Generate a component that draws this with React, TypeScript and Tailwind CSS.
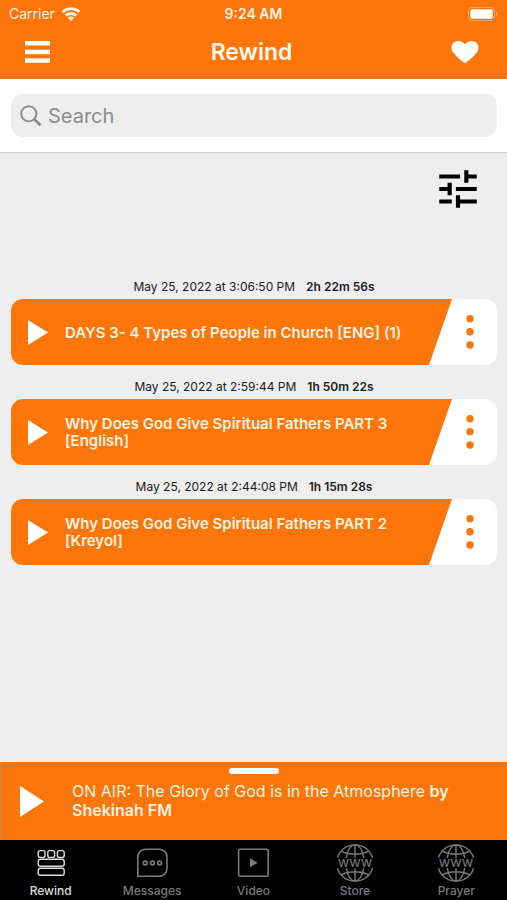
import { useState } from 'react'
import { MdTune } from 'react-icons/md'

interface Recording {
  date: string
  duration: string
  title: string
}

const recordings: Recording[] = [
  {
    date: 'May 25, 2022 at 3:06:50 PM',
    duration: '2h 22m 56s',
    title: 'DAYS 3- 4 Types of People in Church [ENG] (1)',
  },
  {
    date: 'May 25, 2022 at 2:59:44 PM',
    duration: '1h 50m 22s',
    title: 'Why Does God Give Spiritual Fathers PART 3 [English]',
  },
  {
    date: 'May 25, 2022 at 2:44:08 PM',
    duration: '1h 15m 28s',
    title: 'Why Does God Give Spiritual Fathers PART 2 [Kreyol]',
  },
]

function WifiIcon() {
  return (
    <svg width="20" height="14" viewBox="0 0 20 14" fill="none" stroke="currentColor" strokeWidth="2.8">
      <path d="M1.6 5C6.4 0.6 13.6 0.6 18.400 5" />
      <path d="M4.700 8.500C7.700 5.800 12.300 5.800 15.300 8.500" />
      <path d="M6.700 10.700C8.600 9.200 11.400 9.200 13.300 10.700L10 14Z" fill="currentColor" stroke="none" />
    </svg>
  )
}

function BatteryIcon() {
  return (
    <svg width="30" height="14" viewBox="0 0 30 14" fill="none">
      <rect x="0.500" y="0.500" width="26" height="13" rx="3.500" stroke="white" strokeOpacity="0.35" />
      <rect x="2.300" y="2.300" width="22.400" height="9.400" rx="2" fill="white" />
      <path d="M28 5v4c1.200-.5 1.600-1.100 1.600-2S29.200 5.500 28 5z" fill="white" fillOpacity="0.4" />
    </svg>
  )
}

function MenuIcon() {
  return (
    <svg width="26" height="22" viewBox="0 0 26 22" fill="currentColor">
      <rect x="1" width="25" height="4.500" />
      <rect x="1" y="8.700" width="25" height="4.500" />
      <rect x="1" y="17.300" width="25" height="4.500" />
    </svg>
  )
}

function HeartIcon() {
  return (
    <svg width="28" height="24" viewBox="0 0 28 24" fill="currentColor">
      <path d="M14 23.200C12.500 22.200 8.500 19.400 4.800 15.500C1.800 12.600 0.500 10.300 0.500 7.600C0.500 3.700 3.400 0.900 7.200 0.900C10 0.900 12.500 2.200 14 4.200C15.500 2.200 18 0.900 20.800 0.900C24.600 0.900 27.500 3.700 27.500 7.600C27.500 10.300 26.200 12.600 23.200 15.500C19.500 19.400 15.500 22.200 14 23.200Z" />
    </svg>
  )
}

function SearchIcon() {
  return (
    <svg width="22" height="22" viewBox="0 0 22 22" fill="none" stroke="currentColor">
      <circle cx="8.800" cy="8.800" r="7.600" strokeWidth="1.900" />
      <path d="M14 14l6.500 6.200" strokeWidth="2.600" />
    </svg>
  )
}

function PlayIcon({ className }: { className: string }) {
  return (
    <svg className={className} viewBox="0 0 20 25" preserveAspectRatio="none" fill="currentColor">
      <path d="M0 0L20 12.500L0 25Z" />
    </svg>
  )
}

function DotsIcon() {
  return (
    <svg width="8" height="36" viewBox="0 0 8 36" fill="currentColor">
      <circle cx="4" cy="4.800" r="3.700" />
      <circle cx="4" cy="17.800" r="3.700" />
      <circle cx="4" cy="31" r="3.700" />
    </svg>
  )
}

function RewindIcon() {
  return (
    <svg width="38" height="38" viewBox="0 0 38 38" fill="none" stroke="currentColor" strokeWidth="1.400">
      <rect x="6.200" y="6.600" width="6.800" height="6.800" rx="2" />
      <rect x="15.800" y="6.600" width="6.800" height="6.800" rx="2" />
      <rect x="25.400" y="6.600" width="6.800" height="6.800" rx="2" />
      <rect x="6.200" y="15.200" width="26" height="7" rx="2.200" />
      <rect x="6.200" y="24.200" width="26" height="7" rx="2.200" />
    </svg>
  )
}

function MessagesIcon() {
  return (
    <svg width="38" height="38" viewBox="0 0 38 38" fill="none" stroke="currentColor" strokeWidth="1.600">
      <path d="M4.800 32.300V13C4.800 8.500 8.400 5.200 12.800 5.200H26C30.400 5.200 34 8.500 34 13V24.500C34 29 30.400 32.300 26 32.300Z" />
      <circle cx="12.200" cy="19" r="1.900" />
      <circle cx="19.400" cy="19" r="1.900" />
      <circle cx="26.600" cy="19" r="1.900" />
    </svg>
  )
}

function VideoIcon() {
  return (
    <svg width="38" height="38" viewBox="0 0 38 38" fill="none" stroke="currentColor" strokeWidth="1.600">
      <rect x="4.600" y="5.200" width="29.600" height="27.100" rx="1.500" />
      <path d="M16 14.300L23.700 18.700L16 23.200Z" fill="currentColor" stroke="none" />
    </svg>
  )
}

function WebIcon() {
  return (
    <svg width="38" height="38" viewBox="0 0 38 38" fill="none" stroke="currentColor" strokeWidth="1.400">
      {/* upper half of the globe */}
      <path d="M1.500 13.800C3.600 6.300 10.600 0.900 19 0.900S34.400 6.300 36.500 13.800" />
      <path d="M10.200 13.800C11.700 6.500 15 0.900 19 0.900S26.300 6.500 27.800 13.800" />
      <path d="M19 0.900V13.800M5.200 7.200C13 11.300 25 11.300 32.800 7.200" />
      {/* lower half */}
      <path d="M1.500 24.200C3.600 31.700 10.600 37.100 19 37.100S34.400 31.700 36.500 24.200" />
      <path d="M10.200 24.200C11.700 31.500 15 37.100 19 37.100S26.300 31.500 27.800 24.200" />
      <path d="M19 24.200V37.100M5.200 30.800C13 26.700 25 26.700 32.800 30.800" />
      <text x="19" y="22.500" textAnchor="middle" fontSize="14" fill="currentColor" stroke="none">
        www
      </text>
    </svg>
  )
}

const tabs = [
  { label: 'Rewind', icon: RewindIcon },
  { label: 'Messages', icon: MessagesIcon },
  { label: 'Video', icon: VideoIcon },
  { label: 'Store', icon: WebIcon },
  { label: 'Prayer', icon: WebIcon },
]

function RecordingCard({ recording }: { recording: Recording }) {
  return (
    <li>
      <p className="flex justify-center gap-[11px] text-xs leading-4 text-[#1c1c1c]">
        <span>{recording.date}</span>
        <span className="font-semibold">{recording.duration}</span>
      </p>
      <div className="mt-1 flex min-h-[66px] overflow-hidden rounded-xl bg-white">
        <div className="flex flex-1 items-center bg-[#fe760a] pl-[17px] pr-8 text-white [clip-path:polygon(0_0,100%_0,calc(100%-23px)_100%,0_100%)]">
          <button aria-label={`Play ${recording.title}`} className="shrink-0">
            <PlayIcon className="h-[25px] w-5" />
          </button>
          <h2 className="ml-[17px] text-[15px] font-semibold leading-[17px] text-[#fff3e2]">{recording.title}</h2>
        </div>
        <button aria-label="More options" className="flex w-[45px] items-center pl-[14px] text-[#fe760a]">
          <DotsIcon />
        </button>
      </div>
    </li>
  )
}

export default function App() {
  const [query, setQuery] = useState('')
  const [activeTab, setActiveTab] = useState('Rewind')

  return (
    <div className="flex min-h-screen flex-col bg-[#eeeeee] font-['Inter','Liberation_Sans',sans-serif]">
      <header className="bg-[#fe760a] text-white">
        <div className="grid h-7 grid-cols-3 items-center px-[9px] text-sm text-[#fff3e2]">
          <div className="flex items-center gap-[6px]">
            <span>Carrier</span>
            <WifiIcon />
          </div>
          <span className="text-center font-semibold">9:24 AM</span>
          <div className="flex justify-end">
            <BatteryIcon />
          </div>
        </div>
        <div className="grid h-[51px] grid-cols-3 items-center border-b border-[#e5761f] pb-0.5 pl-6 pr-7">
          <button aria-label="Menu" className="justify-self-start">
            <MenuIcon />
          </button>
          <h1 className="text-center text-[23px] font-semibold text-[#fff8ef]">Rewind</h1>
          <button aria-label="Favorites" className="justify-self-end">
            <HeartIcon />
          </button>
        </div>
      </header>

      <div className="border-b border-[#d2d2d2] bg-white py-[15px] pl-[11px] pr-[10px]">
        <label className="flex h-[43px] items-center gap-[6px] rounded-xl bg-[#eeeeee] pl-[9px] text-[#8c8c8c]">
          <SearchIcon />
          <input
            type="text"
            aria-label="Search"
            placeholder="Search"
            value={query}
            onChange={(e) => setQuery(e.target.value)}
            className="min-w-0 flex-1 bg-transparent text-xl text-black outline-none placeholder:text-[#8c8c8c]"
          />
        </label>
      </div>

      <main className="flex-1 pl-[11px] pr-[10px] pt-[11px]">
        <div className="flex justify-end pr-[14px]">
          <button aria-label="Filter">
            <MdTune size={50} />
          </button>
        </div>
        <ul className="mt-[65px] flex flex-col gap-[14px]">
          {recordings.map((recording) => (
            <RecordingCard key={recording.title} recording={recording} />
          ))}
        </ul>
      </main>

      <section className="flex min-h-[78px] flex-col border-l border-[#c98a5a] bg-[#fe760a] pt-[6px] text-white">
        <div className="h-[6px] w-[50px] self-center rounded-full bg-white" />
        <div className="flex items-center pl-[19px] pr-12 pt-2">
          <button aria-label="Play live" className="shrink-0">
            <PlayIcon className="h-[31px] w-6" />
          </button>
          <p className="ml-7 text-base leading-[19px] text-[#fff3e2]">
            ON AIR: The Glory of God is in the Atmosphere <strong className="font-semibold">by</strong>{' '}
            <strong className="font-semibold">Shekinah FM</strong>
          </p>
        </div>
      </section>

      <nav className="grid h-[60px] grid-cols-5 bg-black">
        {tabs.map(({ label, icon: Icon }) => (
          <button
            key={label}
            onClick={() => setActiveTab(label)}
            className={
              activeTab === label
                ? 'flex flex-col items-center pt-1 text-xs text-[#dedede]'
                : 'flex flex-col items-center pt-1 text-xs text-[#7a7a7a]'
            }
          >
            <Icon />
            <span className="font-medium leading-[18px]">{label}</span>
          </button>
        ))}
      </nav>
    </div>
  )
}
